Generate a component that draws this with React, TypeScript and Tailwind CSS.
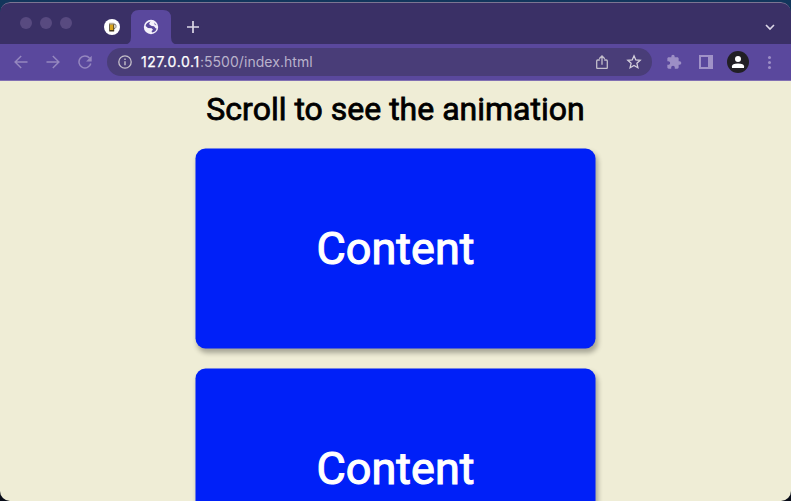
import type { ReactNode } from "react";

function Stroke({ size, className, children }: { size: number; className: string; children: ReactNode }) {
  return (
    <svg width={size} height={size} viewBox={`0 0 ${size} ${size}`} fill="none" stroke="currentColor" className={`shrink-0 ${className}`}>
      {children}
    </svg>
  );
}

function TabStrip() {
  return (
    <div className="flex h-[42px] w-full items-start rounded-t-[10px] border-t border-[#7b7592] bg-[#3a3066]">
      <div className="mt-[14px] ml-5 flex gap-2">
        <span className="size-3 rounded-full bg-[#584a80]" />
        <span className="size-3 rounded-full bg-[#584a80]" />
        <span className="size-3 rounded-full bg-[#584a80]" />
      </div>
      <div className="mt-4 ml-8 flex size-4 items-center justify-center rounded-full bg-white">
        <svg width="16" height="16" viewBox="0 0 16 16">
          <path d="M10 5.2h1.1q.9.4.9 2t-.9 2.1H10" fill="none" stroke="#777468" strokeWidth="1" />
          <rect x="5.2" y="4.5" width="5" height="8" rx=".6" fill="#41351d" />
          <rect x="6" y="5.3" width="3.3" height="5.7" fill="#d9a51d" />
          <rect x="5" y="3.8" width="5.2" height="1.6" rx=".8" fill="#b8b09b" />
        </svg>
      </div>
      <svg width="56" height="35" viewBox="0 0 56 35" className="mt-[7px] ml-[3px] shrink-0">
        <path d="M0 35Q8 35 8 27V8Q8 0 16 0H40Q48 0 48 8V27Q48 35 56 35Z" fill="#5a489d" />
        <circle cx="28" cy="17" r="7.2" fill="#f4f1fa" />
        <path
          d="M27.6 11.4 26.2 13.2 26.6 14.8 28.8 16 31 16.2 32.6 18.2 33.6 18.4Q33 21.6 29 22.6L28.6 21 30 19.8 28.6 18.2 25 17.9 22.6 16Q23 12.6 27.6 11.4Z"
          fill="#5a489d"
        />
        <path d="M31 12.4 33 14.2 33.3 15.4 31.5 14.6Z" fill="#8d7fbd" />
      </svg>
      <Stroke size={14} className="mt-[17px] ml-[7px] text-[#dcd7e7]">
        <path d="M7 1v12M1 7h12" strokeWidth="1.7" />
      </Stroke>
      <Stroke size={12} className="mt-[18px] mr-[15px] ml-auto text-[#dcd7e7]">
        <path d="m2 4 4 4 4-4" strokeWidth="1.6" />
      </Stroke>
    </div>
  );
}

function AddressBar() {
  return (
    <div className="flex h-7 w-[545px] shrink-0 items-center rounded-full bg-[#493d78] pl-[11px]">
      <Stroke size={14} className="text-[#c6c1ca]">
        <circle cx="7" cy="7" r="6.2" strokeWidth="1.3" />
        <path d="M7 6.2v4M7 3.5v1.4" strokeWidth="1.4" />
      </Stroke>
      <span className="ml-[9px] font-['Inter',sans-serif] text-[14px] leading-5 tracking-[0.05px] whitespace-nowrap text-[#b9b2cb]">
        <span className="tracking-[0.63px] text-white [-webkit-text-stroke:0.25px_white]">127.0.0.1</span>:5500/index.html
      </span>
      <Stroke size={14} className="mr-[17px] ml-auto text-[#c3becb]">
        <path d="M4.8 5H2.7Q1.7 5 1.7 6v6.5q0 1 1 1h8.6q1 0 1-1V6q0-1-1-1H9.2M7 9.7V1.2M4.2 3.8 7 1l2.8 2.8" strokeWidth="1.3" />
      </Stroke>
      <Stroke size={16} className="mr-[10px] text-[#d4cfdb]">
        <path d="m8 1.8 1.8 4.1 4.4.4-3.3 3 1 4.4L8 11.4l-3.9 2.3 1-4.4-3.3-3 4.4-.4Z" strokeWidth="1.3" />
      </Stroke>
    </div>
  );
}

function Toolbar() {
  return (
    <div className="flex h-[37px] items-center border-b border-[#8270b3] bg-[#5a489d]">
      <Stroke size={14} className="ml-[14px] text-[#9587bf]">
        <path d="M13.5 7H1M7.2 .9 1.1 7l6.1 6.1" strokeWidth="1.45" />
      </Stroke>
      <Stroke size={14} className="ml-[18px] text-[#9587bf]">
        <path d="M.5 7H13M6.8.9 12.9 7l-6.1 6.1" strokeWidth="1.45" />
      </Stroke>
      <Stroke size={14} className="ml-[18px] text-[#9587bf]">
        <path d="M11.5 3A6 6 0 1 0 12.8 8.5" strokeWidth="1.5" />
        <path d="M13.7.8v5.6H8.1Z" fill="currentColor" stroke="none" />
      </Stroke>
      <div className="ml-[15px]">
        <AddressBar />
      </div>
      <svg width="16" height="16" viewBox="0 0 24 24" className="ml-[14px] shrink-0 fill-[#9c8ec5]">
        <path d="M20.5 11H19V7c0-1.1-.9-2-2-2h-4V3.5a2.5 2.5 0 0 0-5 0V5H4c-1.1 0-1.99.9-1.99 2v3.8H3.5c1.49 0 2.7 1.21 2.7 2.7s-1.21 2.7-2.7 2.7H2V20c0 1.1.9 2 2 2h3.8v-1.5c0-1.49 1.21-2.7 2.7-2.7s2.7 1.21 2.7 2.7V22H17c1.1 0 2-.9 2-2v-4h1.5a2.5 2.5 0 0 0 0-5z" />
      </svg>
      <div className="ml-[17px] h-[14px] w-[14px] shrink-0 border-2 border-r-[5.5px] border-[#a092c7]" />
      <div className="ml-[14px] flex size-[22px] shrink-0 items-center justify-center rounded-full bg-[#211f24]">
        <svg width="14" height="14" viewBox="0 0 14 14" className="fill-white">
          <circle cx="7" cy="4.1" r="3" />
          <path d="M1 13v-1.8Q1 8.5 7 8.5t6 2.7V13Z" />
        </svg>
      </div>
      <div className="ml-[19px] flex shrink-0 flex-col gap-[2px]">
        <span className="size-[3px] rounded-full bg-[#9c8ec5]" />
        <span className="size-[3px] rounded-full bg-[#9c8ec5]" />
        <span className="size-[3px] rounded-full bg-[#9c8ec5]" />
      </div>
    </div>
  );
}

function ContentBox() {
  return (
    <div className="flex h-[200px] w-[400px] shrink-0 -translate-x-[0.5px] -translate-y-[0.5px] items-center justify-center rounded-[10px] bg-[#0020f8] pb-[2px] pl-px shadow-[2px_4px_5px_rgba(0,0,0,0.3)]">
      <h2 className="text-[45px] leading-[53px] text-white [-webkit-text-stroke:1.1px_white]">Content</h2>
    </div>
  );
}

export default function App() {
  return (
    <div className="flex h-[501px] w-[791px] flex-col overflow-hidden bg-linear-to-b from-[#12365c] to-[#080c18] pt-[2px]">
      <div className="flex min-h-0 flex-1 flex-col overflow-hidden rounded-[10px]">
        <TabStrip />
        <Toolbar />
        <main className="flex min-h-0 flex-1 flex-col items-center gap-5 overflow-hidden bg-[#efedd6] pt-[10px] font-['Roboto',sans-serif]">
          <h1 className="h-[38px] shrink-0 text-[32px] leading-[37px] text-black [-webkit-text-stroke:0.8px_black]">Scroll to see the animation</h1>
          <ContentBox />
          <ContentBox />
        </main>
      </div>
    </div>
  );
}
